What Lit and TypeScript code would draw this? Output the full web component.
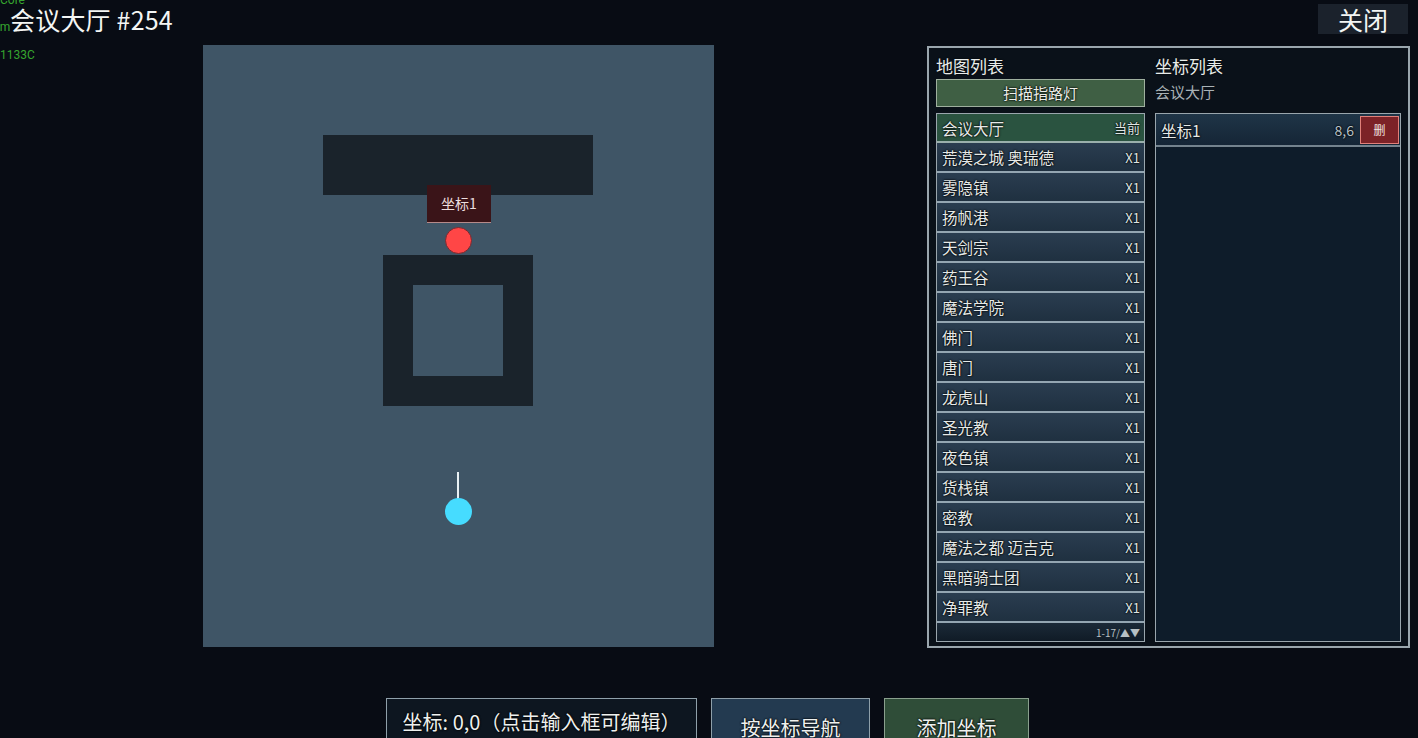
import { LitElement, html, css } from "lit";
import { customElement } from "lit/decorators.js";

const MAPS = ["荒漠之城 奥瑞德","雾隐镇","扬帆港","天剑宗","药王谷","魔法学院","佛门","唐门","龙虎山","圣光教","夜色镇","货栈镇","密教","魔法之都 迈吉克","黑暗骑士团","净罪教"];

@customElement("app-root")
export class AppRoot extends LitElement {
  static styles = css`
    :host { display: block; width: 1418px; height: 738px; overflow: hidden; position: relative; background: #080c14; color: #e8ecea;
      font-family: "Noto Sans CJK SC", "Noto Sans", sans-serif; }
    * { box-sizing: border-box; }
    .debug { position: absolute; left: 0; color: #36a52f; font: 12px/14px Roboto, sans-serif; white-space: nowrap; }
    .d1 { top: -7px; } .d2 { top: 20px; left: -7px; } .d3 { top: 48px; }
    .header { height: 45px; display: flex; align-items: flex-start; justify-content: space-between; padding: 4px 10px 0 10px; }
    .title { font-size: 25px; line-height: 30px; color: #f4f6f4; letter-spacing: 0.2px; }
    .close { width: 90px; height: 30px; background: #1b222c; border: 0; color: #f4f6f4; font: inherit; font-size: 25px; line-height: 30px; padding: 0; text-align: center; }
    .main { height: 603px; display: flex; align-items: flex-start; padding: 0 8px 0 203px; justify-content: space-between; }
    .map { position: relative; width: 511px; height: 602px; background: #3f5566; }
    .wall { position: absolute; background: #1a232b; }
    .hole { position: absolute; background: #3f5566; }
    .tag { position: absolute; left: 224px; top: 140px; width: 64px; height: 38px; background: #3a1418; border-bottom: 1px solid #b58a8a; color: #ecdede; font-size: 14px; line-height: 37px; text-align: center; }
    .dot { position: absolute; width: 27px; height: 27px; border-radius: 50%; }
    .red { left: 242px; top: 182px; background: #ff4646; border: 1px solid #7a2a30; }
    .cyan { left: 242px; top: 453px; background: #46dcff; }
    .stick { position: absolute; left: 254px; top: 427px; width: 2px; height: 27px; background: #e9f1f4; }
    .panel { width: 483px; height: 602px; margin-top: 1px; border: 2px solid #9aa6ad; background: #0a1119; padding: 6px 8px 5px 7px; display: grid; grid-template-columns: 209px 246px; column-gap: 10px; }
    .col { display: flex; flex-direction: column; min-width: 0; }
    .h { font-size: 17px; line-height: 24px; height: 24px; color: #e8ecea; text-shadow: 0 0 2px #000; }
    .scan { height: 28px; margin-top: 1px; border: 1px solid #9fb09f; background: #3f5f44; color: #ecefe9; font: inherit; font-size: 15px; line-height: 24px; padding: 0; text-shadow: 0 0 2px #000, 0 0 2px #000; }
    .sub { height: 28px; margin-top: 1px; font-size: 15px; line-height: 26px; color: #a9b2b6; }
    .list { margin-top: 6px; height: 529px; border: 1px solid #9aa6ad; display: flex; flex-direction: column; background: #0f1a25; }
    .row { flex: none; height: 30px; display: flex; align-items: center; justify-content: space-between; padding: 0 4px 0 5px; background: linear-gradient(#2a3d50, #1f3040); border-bottom: 2px solid #94a6b2; font-size: 15.5px; color: #e6eae8; text-shadow: 0 0 2px #000, 0 0 2px #000; white-space: nowrap; }
    .row.cur { height: 29px; background: #2a5340; border-bottom-color: #9ab0ac; }
    .count { font-size: 13px; color: #dfe5e4; }
    .foot { flex: 1; display: flex; align-items: center; justify-content: flex-end; padding-right: 4px; font-size: 10px; color: #b7c0c4; background: linear-gradient(#1b2a38, #101b26); white-space: nowrap; }
    .pts .row { height: 33px; padding-right: 0; background: linear-gradient(#1f3547, #152536); border-bottom-color: #74838e; }
    .pts { background: #0e1c2a; }
    .rt { display: flex; align-items: center; gap: 6px; }
    .val { font-size: 14px; color: #b8c3c8; }
    .del { width: 39px; height: 28px; border: 1px solid #e0807a; background: #7c2227; color: #f0e2e0; font: inherit; font-size: 12px; padding: 0; margin-right: 1px; }
    .bar { margin-top: 50px; display: flex; gap: 14px; padding-left: 386px; height: 60px; }
    .bar > * { height: 60px; border: 1px solid #8fa0aa; font: inherit; font-size: 20px; line-height: 46px; color: #eef1ef; text-align: center; padding: 0; text-shadow: 0 0 2px #000, 0 0 2px #000; white-space: nowrap; }
    .field { width: 311px; background: #0d1620; padding: 0; }
    .nav { width: 159px; background: #233a50; }
    .add { width: 145px; background: #2f4d38; border-color: #8aa08e; }
  `;

  render() {
    return html`
      <div class="debug d1">Core</div>
      <div class="debug d2">om</div>
      <div class="debug d3">1133C</div>
      <div class="header">
        <div class="title">会议大厅 #254</div>
        <button class="close">关闭</button>
      </div>
      <div class="main">
        <div class="map">
          <div class="wall" style="left:120px;top:90px;width:270px;height:60px"></div>
          <div class="wall" style="left:180px;top:210px;width:150px;height:151px"></div>
          <div class="hole" style="left:210px;top:240px;width:90px;height:91px"></div>
          <div class="tag">坐标1</div>
          <div class="dot red"></div>
          <div class="stick"></div>
          <div class="dot cyan"></div>
        </div>
        <div class="panel">
          <div class="col">
            <div class="h">地图列表</div>
            <button class="scan">扫描指路灯</button>
            <div class="list">
              <div class="row cur"><span>会议大厅</span><span class="count">当前</span></div>
              ${MAPS.map(m => html`<div class="row"><span>${m}</span><span class="count">X1</span></div>`)}
              <div class="foot">1-17/▲▼</div>
            </div>
          </div>
          <div class="col">
            <div class="h">坐标列表</div>
            <div class="sub">会议大厅</div>
            <div class="list pts">
              <div class="row"><span>坐标1</span><span class="rt"><span class="val">8,6</span><button class="del">删</button></span></div>
            </div>
          </div>
        </div>
      </div>
      <div class="bar">
        <div class="field">坐标: 0,0（点击输入框可编辑）</div>
        <button class="nav">按坐标导航</button>
        <button class="add">添加坐标</button>
      </div>
    `;
  }
}
